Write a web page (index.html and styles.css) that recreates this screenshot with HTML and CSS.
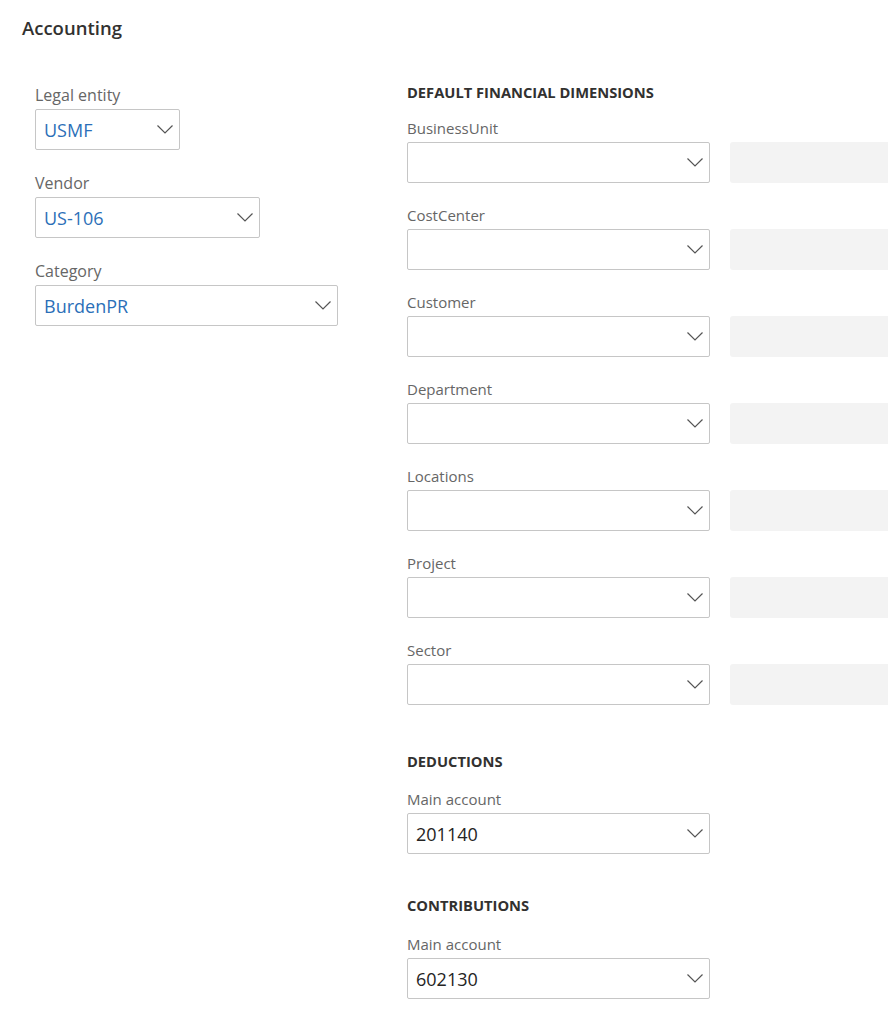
FILE: index.html
```html
<!DOCTYPE html>
<html>
<head>
  <title>Accounting</title>
  <link rel="stylesheet" href="styles.css">
</head>
<body>

<div class="page">
  <h1 class="title">Accounting</h1>

  <div class="columns">
    <!-- left: entity / vendor / category -->
    <div class="col-left">
      <div class="field">
        <label>Legal entity</label>
        <div class="combo w-small">
          <span class="value link">USMF</span>
          <svg class="chev" width="16" height="9" viewBox="0 0 16 9"><polyline points="0.5,0.5 8,8 15.5,0.5"/></svg>
        </div>
      </div>
      <div class="field">
        <label>Vendor</label>
        <div class="combo w-mid">
          <span class="value link">US-106</span>
          <svg class="chev" width="16" height="9" viewBox="0 0 16 9"><polyline points="0.5,0.5 8,8 15.5,0.5"/></svg>
        </div>
      </div>
      <div class="field">
        <label>Category</label>
        <div class="combo w-wide">
          <span class="value link">BurdenPR</span>
          <svg class="chev" width="16" height="9" viewBox="0 0 16 9"><polyline points="0.5,0.5 8,8 15.5,0.5"/></svg>
        </div>
      </div>
    </div>

    <!-- right: dimensions and accounts -->
    <div class="col-right">
      <h2 class="section">DEFAULT FINANCIAL DIMENSIONS</h2>
      <div id="dims"></div>

      <h2 class="section sec-deduct">DEDUCTIONS</h2>
      <div class="rfield">
        <label>Main account</label>
        <div class="row">
          <div class="combo w-wide">
            <span class="value">201140</span>
            <svg class="chev" width="16" height="9" viewBox="0 0 16 9"><polyline points="0.5,0.5 8,8 15.5,0.5"/></svg>
          </div>
        </div>
      </div>

      <h2 class="section sec-contrib">CONTRIBUTIONS</h2>
      <div class="rfield">
        <label>Main account</label>
        <div class="row">
          <div class="combo w-wide">
            <span class="value">602130</span>
            <svg class="chev" width="16" height="9" viewBox="0 0 16 9"><polyline points="0.5,0.5 8,8 15.5,0.5"/></svg>
          </div>
        </div>
      </div>
    </div>
  </div>
</div>

<script>
  const dims = ["BusinessUnit", "CostCenter", "Customer", "Department", "Locations", "Project", "Sector"];
  const holder = document.getElementById("dims");
  for (let i = 0; i < dims.length; i++) {
    const f = document.createElement("div");
    f.className = "rfield";
    f.innerHTML =
      '<label>' + dims[i] + '</label>' +
      '<div class="row">' +
        '<div class="combo w-wide"><span class="value"></span>' +
        '<svg class="chev" width="16" height="9" viewBox="0 0 16 9"><polyline points="0.5,0.5 8,8 15.5,0.5"/></svg></div>' +
        '<div class="desc"></div>' +
      '</div>';
    holder.appendChild(f);
  }
</script>

</body>
</html>
```

FILE: styles.css
```css
* {
  margin: 0;
  padding: 0;
  box-sizing: border-box;
}

body {
  font-family: "Open Sans", "Noto Sans", sans-serif;
  background-color: #fff;
  color: #323130;
  overflow: hidden;
}

.page {
  padding: 15px 0 0 22px;
}

.title {
  font-size: 18.5px;
  line-height: 26px;
  font-weight: 600;
  color: #323130;
}

.columns {
  display: flex;
  margin-top: 41px;
}

.col-left {
  width: 385px;
  flex-shrink: 0;
  padding-left: 13px;
  padding-top: 2px;
}

.col-right {
  flex: 1;
  min-width: 0;
}

.field {
  margin-bottom: 22px;
}

.field label {
  display: block;
  font-size: 16px;
  line-height: 22px;
  color: #666;
  margin-bottom: 3px;
}

.rfield {
  margin-bottom: 22px;
}

.rfield label {
  display: block;
  font-size: 15px;
  line-height: 20px;
  color: #666;
  margin-bottom: 4px;
}

.section {
  font-size: 14.7px;
  line-height: 20px;
  font-weight: 700;
  color: #323130;
  margin-bottom: 16px;
}

.sec-deduct {
  margin-top: 46px;
  margin-bottom: 18px;
}

.sec-contrib {
  margin-top: 41px;
  margin-bottom: 19px;
}

.row {
  display: flex;
  gap: 20px;
}

.combo {
  height: 41px;
  border: 1px solid #c6c6c6;
  border-radius: 2px;
  display: flex;
  align-items: center;
  padding: 0 6px 0 8px;
  background: #fff;
  flex-shrink: 0;
}

.w-small { width: 145px; }
.w-mid { width: 225px; }
.w-wide { width: 303px; }

.value {
  flex: 1;
  font-size: 18px;
  color: #252423;
}

.value.link {
  color: #2b6fb8;
}

.chev {
  fill: none;
  stroke: #555;
  stroke-width: 1.2;
}

.desc {
  width: 200px;
  height: 41px;
  background-color: #f3f3f3;
  border-radius: 3px;
  flex-shrink: 0;
}
```
